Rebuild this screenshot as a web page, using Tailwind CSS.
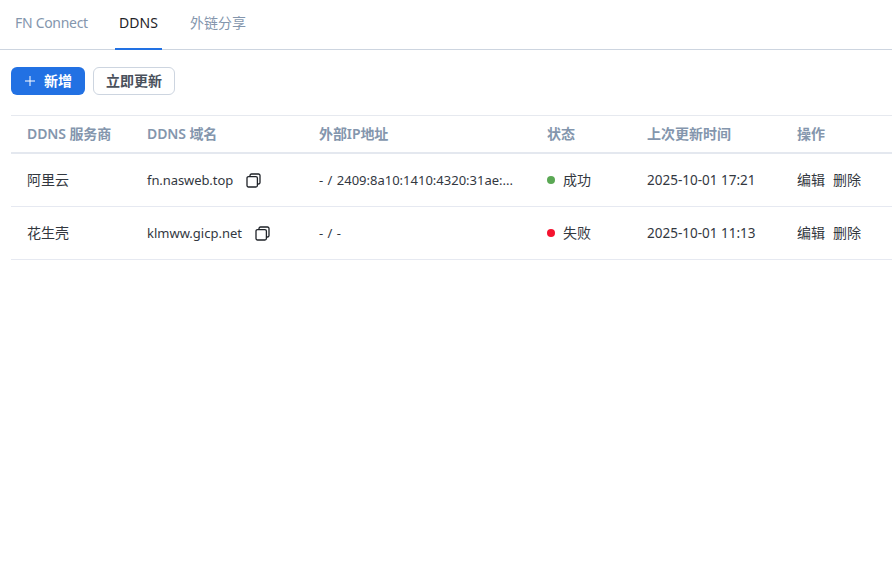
<!DOCTYPE html>
<html lang="zh-CN">
<head>
    <meta charset="UTF-8">
    <title>DDNS</title>
    <script src="https://cdn.jsdelivr.net/npm/@tailwindcss/browser@4"></script>
</head>
<body class="bg-white font-['Noto_Sans','Noto_Sans_CJK_SC',sans-serif] text-sm text-[#33383f]">
    <div class="w-[892px] h-[578px] overflow-hidden">
        <!-- Tabs -->
        <div class="flex h-[50px] border-b border-[#cdd5e0] pl-[11px]">
            <div class="w-[104px] pl-1 pt-[13px] text-[#8496ad] tracking-[-0.3px]">FN Connect</div>
            <div class="w-[47px] pt-[13px] text-center text-[#1f2329] border-b-2 border-[#2271e3] h-[50px]">DDNS</div>
            <div class="ml-[28px] pt-[13px] text-[#8496ad]">外链分享</div>
        </div>

        <!-- Buttons -->
        <div class="flex gap-2 pl-[11px] pt-[17px]">
            <button class="flex items-center w-[74px] h-7 rounded-md bg-[#2271e3] text-white font-semibold pl-[13px]">
                <svg class="w-3 h-3 mr-[8px]" viewBox="0 0 12 12" fill="none" stroke="currentColor" stroke-width="1"><path d="M6 1v10M1 6h10"/></svg>
                新增
            </button>
            <button class="w-[82px] h-7 rounded-md border border-[#cdd5e0] font-semibold text-[#4a515c]">立即更新</button>
        </div>

        <!-- Table -->
        <div class="ml-[11px] mt-5 border-t border-[#e6e9ef]">
            <div class="grid grid-cols-[120px_172px_228px_100px_150px_110px] h-[38px] items-center border-b-2 border-[#e4e8ef] font-semibold text-[#8496ad] [&>div]:pl-4">
                <div class="tracking-[-0.1px]">DDNS 服务商</div>
                <div class="tracking-[-0.1px]">DDNS 域名</div>
                <div class="tracking-[-0.1px]">外部IP地址</div>
                <div>状态</div>
                <div>上次更新时间</div>
                <div>操作</div>
            </div>
            <div class="grid grid-cols-[120px_172px_228px_100px_150px_110px] h-[53px] items-center border-b border-[#e6e9f1] text-[13px] [&>div]:pl-4">
                <div class="text-sm">阿里云</div>
                <div class="flex items-center tracking-[-0.08px]">
                    fn.nasweb.top
                    <svg class="w-[15px] h-[15px] ml-[13px]" viewBox="0 0 15 15" fill="none" stroke="#1f2329" stroke-width="1.3"><rect x="1" y="3.6" width="10.4" height="10.4" rx="1.5"/><path d="M4 3.6V2.5A1.5 1.5 0 0 1 5.5 1h7A1.5 1.5 0 0 1 14 2.5v7A1.5 1.5 0 0 1 12.5 11h-1.1"/></svg>
                </div>
                <div class="[word-spacing:1px]">- / 2409:8a10:1410:4320:31ae:...</div>
                <div class="flex items-center text-sm"><span class="w-2 h-2 rounded-full bg-[#5aa854] mr-2"></span>成功</div>
                <div class="text-[13.5px] pt-[2px]">2025-10-01 17:21</div>
                <div class="flex gap-2 text-sm"><span>编辑</span><span>删除</span></div>
            </div>
            <div class="grid grid-cols-[120px_172px_228px_100px_150px_110px] h-[53px] items-center border-b border-[#e6e9f1] text-[13px] [&>div]:pl-4">
                <div class="text-sm">花生壳</div>
                <div class="flex items-center">
                    klmww.gicp.net
                    <svg class="w-[15px] h-[15px] ml-[13px]" viewBox="0 0 15 15" fill="none" stroke="#1f2329" stroke-width="1.3"><rect x="1" y="3.6" width="10.4" height="10.4" rx="1.5"/><path d="M4 3.6V2.5A1.5 1.5 0 0 1 5.5 1h7A1.5 1.5 0 0 1 14 2.5v7A1.5 1.5 0 0 1 12.5 11h-1.1"/></svg>
                </div>
                <div class="[word-spacing:1px]">- / -</div>
                <div class="flex items-center text-sm"><span class="w-2 h-2 rounded-full bg-[#f5132f] mr-2"></span>失败</div>
                <div class="text-[13.5px] pt-[2px]">2025-10-01 11:13</div>
                <div class="flex gap-2 text-sm"><span>编辑</span><span>删除</span></div>
            </div>
        </div>
    </div>
</body>
</html>
